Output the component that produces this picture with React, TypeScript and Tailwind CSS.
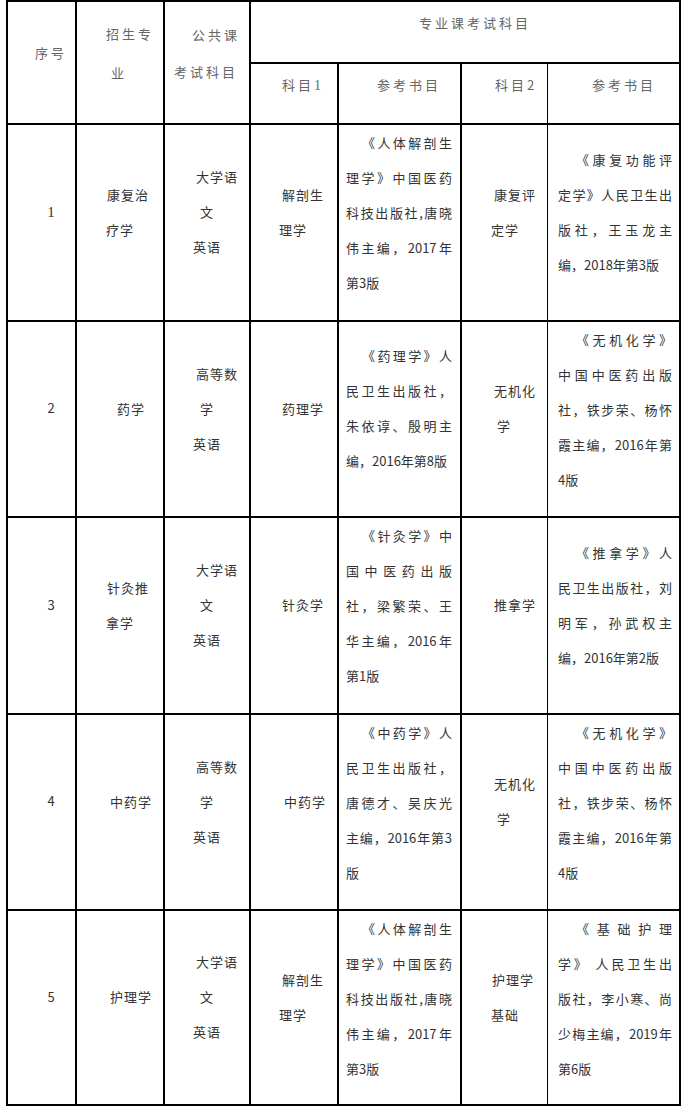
import React from "react";

type L = { t: string; c?: string; j?: boolean };

const font = "font-['Noto_Sans_CJK_SC','Noto_Sans',sans-serif]";

function Short({ lines, extra = "" }: { lines: L[]; extra?: string }) {
  return (
    <div className={`flex flex-col justify-center pb-[22px] ${extra}`}>
      {lines.map((l, i) => (
        <div key={i} className={`leading-[35px] tracking-[1px] whitespace-nowrap ${l.c ?? ""}`}>
          {l.t}
        </div>
      ))}
    </div>
  );
}

function Just({ lines, block, indent }: { lines: L[]; block: string; indent: string }) {
  return (
    <div className="flex flex-col justify-center pb-[22px]">
      <div className={block}>
        {lines.map((l, i) => (
          <div
            key={i}
            className={`leading-[35px] ${l.j ? "text-justify [text-align-last:justify]" : "text-left whitespace-nowrap"} ${i === 0 ? indent : ""}`}
          >
            {l.t}
          </div>
        ))}
      </div>
    </div>
  );
}

const cell = "border-r-2 border-b-2 border-black flex flex-col";

type Row = {
  n: string;
  nc?: string;
  c2: L[];
  c3: L[];
  c4: L[];
  c5: L[];
  c6: L[];
  c7: L[];
};

const rows: Row[] = [
  {
    n: "1",
    nc: "font-['Liberation_Serif',serif] text-[15px]",
    c2: [{ t: "康复治", c: "pl-[30px]" }, { t: "疗学", c: "pl-[29px]" }],
    c3: [{ t: "大学语", c: "pl-[31px]" }, { t: "文", c: "pl-[35px]" }, { t: "英语", c: "pl-[28px]" }],
    c4: [{ t: "解剖生", c: "pl-[31px]" }, { t: "理学", c: "pl-[28px]" }],
    c5: [
      { t: "《人体解剖生", j: true },
      { t: "理学》中国医药", j: true },
      { t: "科技出版社,唐晓", j: true },
      { t: "伟主编，2017年", j: true },
      { t: "第3版" },
    ],
    c6: [{ t: "康复评", c: "pl-[32px]" }, { t: "定学", c: "pl-[29px]" }],
    c7: [
      { t: "《康复功能评", j: true },
      { t: "定学》人民卫生出", j: true },
      { t: "版社，王玉龙主", j: true },
      { t: "编，2018年第3版" },
    ],
  },
  {
    n: "2",
    c2: [{ t: "药学", c: "pl-[40px]" }],
    c3: [{ t: "高等数", c: "pl-[31px]" }, { t: "学", c: "pl-[35px]" }, { t: "英语", c: "pl-[28px]" }],
    c4: [{ t: "药理学", c: "pl-[31px]" }],
    c5: [
      { t: "《药理学》人", j: true },
      { t: "民卫生出版社，", j: true },
      { t: "朱依谆、殷明主", j: true },
      { t: "编，2016年第8版" },
    ],
    c6: [{ t: "无机化", c: "pl-[32px]" }, { t: "学", c: "pl-[35px]" }],
    c7: [
      { t: "《无机化学》", j: true },
      { t: "中国中医药出版", j: true },
      { t: "社，铁步荣、杨怀", j: true },
      { t: "霞主编，2016年第", j: true },
      { t: "4版" },
    ],
  },
  {
    n: "3",
    c2: [{ t: "针灸推", c: "pl-[30px]" }, { t: "拿学", c: "pl-[29px]" }],
    c3: [{ t: "大学语", c: "pl-[31px]" }, { t: "文", c: "pl-[35px]" }, { t: "英语", c: "pl-[28px]" }],
    c4: [{ t: "针灸学", c: "pl-[31px]" }],
    c5: [
      { t: "《针灸学》中", j: true },
      { t: "国中医药出版", j: true },
      { t: "社，梁繁荣、王", j: true },
      { t: "华主编，2016年", j: true },
      { t: "第1版" },
    ],
    c6: [{ t: "推拿学", c: "pl-[32px]" }],
    c7: [
      { t: "《推拿学》人", j: true },
      { t: "民卫生出版社，刘", j: true },
      { t: "明军，孙武权主", j: true },
      { t: "编，2016年第2版" },
    ],
  },
  {
    n: "4",
    c2: [{ t: "中药学", c: "pl-[33px]" }],
    c3: [{ t: "高等数", c: "pl-[31px]" }, { t: "学", c: "pl-[35px]" }, { t: "英语", c: "pl-[28px]" }],
    c4: [{ t: "中药学", c: "pl-[33px]" }],
    c5: [
      { t: "《中药学》人", j: true },
      { t: "民卫生出版社，", j: true },
      { t: "唐德才、吴庆光", j: true },
      { t: "主编，2016年第3", j: true },
      { t: "版" },
    ],
    c6: [{ t: "无机化", c: "pl-[32px]" }, { t: "学", c: "pl-[35px]" }],
    c7: [
      { t: "《无机化学》", j: true },
      { t: "中国中医药出版", j: true },
      { t: "社，铁步荣、杨怀", j: true },
      { t: "霞主编，2016年第", j: true },
      { t: "4版" },
    ],
  },
  {
    n: "5",
    c2: [{ t: "护理学", c: "pl-[33px]" }],
    c3: [{ t: "大学语", c: "pl-[31px]" }, { t: "文", c: "pl-[35px]" }, { t: "英语", c: "pl-[28px]" }],
    c4: [{ t: "解剖生", c: "pl-[31px]" }, { t: "理学", c: "pl-[28px]" }],
    c5: [
      { t: "《人体解剖生", j: true },
      { t: "理学》中国医药", j: true },
      { t: "科技出版社,唐晓", j: true },
      { t: "伟主编，2017年", j: true },
      { t: "第3版" },
    ],
    c6: [{ t: "护理学", c: "pl-[30px]" }, { t: "基础", c: "pl-[29px]" }],
    c7: [
      { t: "《基础护理", j: true },
      { t: "学》 人民卫生出", j: true },
      { t: "版社，李小寒、尚", j: true },
      { t: "少梅主编，2019年", j: true },
      { t: "第6版" },
    ],
  },
];

export default function App() {
  return (
    <div className={`min-h-[1117px] w-[686px] bg-white ${font} text-[13px] text-[#333333]`}>
      <div className="ml-[6px] grid w-fit grid-cols-[69px_88px_86px_88px_123px_86px_133px] grid-rows-[62px_61px_197px_196px_197px_196px_195px] border-l-2 border-t-2 border-black">
        {/* header */}
        <div className={`${cell} row-span-2 justify-center pb-[19px] text-[#666666] tracking-[3px]`}>
          <div className="pl-[27px] leading-[38px]">序号</div>
        </div>
        <div className={`${cell} row-span-2 justify-center pb-[20px] text-[#666666] tracking-[3px]`}>
          <div className="pl-[29px] leading-[39px]">招生专</div>
          <div className="pl-[34px] leading-[39px]">业</div>
        </div>
        <div className={`${cell} row-span-2 justify-center pb-[20px] text-[#666666] tracking-[3px]`}>
          <div className="pl-[27px] leading-[37px]">公共课</div>
          <div className="pl-[9px] leading-[37px]">考试科目</div>
        </div>
        <div className={`${cell} col-span-4 justify-center pb-[18px] text-[#666666] tracking-[3px]`}>
          <div className="pl-[168px] leading-[20px]">专业课考试科目</div>
        </div>
        <div className={`${cell} justify-center pb-[17px] text-[#666666] tracking-[3px]`}>
          <div className="pl-[31px] leading-[20px]">
            科目<span className="font-['Liberation_Serif',serif] text-[14px]">1</span>
          </div>
        </div>
        <div className={`${cell} justify-center pb-[17px] text-[#666666] tracking-[3px]`}>
          <div className="pl-[38px] leading-[20px]">参考书目</div>
        </div>
        <div className="flex flex-col justify-center border-b-2 border-r border-black pb-[17px] text-[#666666] tracking-[3px]">
          <div className="pl-[33px] leading-[20px]">科目2</div>
        </div>
        <div className={`${cell} justify-center pb-[17px] text-[#666666] tracking-[3px]`}>
          <div className="pl-[44px] leading-[20px]">参考书目</div>
        </div>

        {rows.map((r) => (
          <React.Fragment key={r.n}>
            <div className={`${cell} justify-center pb-[22px]`}>
              <div className={`pl-[19px] text-center leading-[20px] ${r.nc ?? ""}`}>{r.n}</div>
            </div>
            <div className={cell}>
              <Short lines={r.c2} extra="flex-1" />
            </div>
            <div className={cell}>
              <Short lines={r.c3} extra="flex-1" />
            </div>
            <div className={cell}>
              <Short lines={r.c4} extra="flex-1" />
            </div>
            <div className={`${cell} [&>div]:flex-1`}>
              <Just lines={r.c5} block="ml-[7px] w-[106px]" indent="ml-[16px]" />
            </div>
            <div className="flex flex-col border-b-2 border-r border-black">
              <Short lines={r.c6} extra="flex-1" />
            </div>
            <div className={`${cell} [&>div]:flex-1`}>
              <Just lines={r.c7} block="ml-[10px] w-[114px]" indent="ml-[18px]" />
            </div>
          </React.Fragment>
        ))}
      </div>
    </div>
  );
}
